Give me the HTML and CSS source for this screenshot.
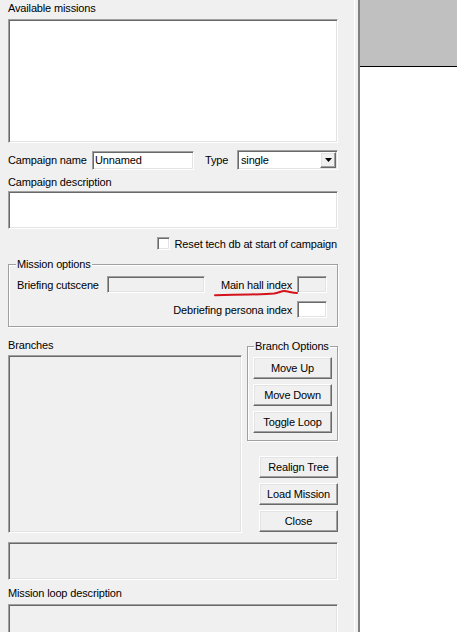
FILE: index.html
```html
<!DOCTYPE html>
<html lang="en">
<head>
    <meta charset="UTF-8">
    <title>Campaign Editor</title>
    <link rel="stylesheet" href="styles.css">
</head>
<body>
    <div class="dialog">
        <div class="editor">
            <!-- Mission list -->
            <div class="caption first">Available missions</div>
            <div class="field sunken white mission-list"></div>

            <!-- Name and type -->
            <div class="name-row">
                <span class="name-label">Campaign name</span>
                <input type="text" class="field sunken white name-input" value="Unnamed">
                <span class="type-label">Type</span>
                <div class="field sunken white combo">
                    <span>single</span>
                    <span class="combo-btn">
                        <svg width="7" height="4" viewBox="0 0 7 4"><polygon points="0,0 7,0 3.5,4" fill="#000"/></svg>
                    </span>
                </div>
            </div>

            <div class="caption desc-label">Campaign description</div>
            <div class="field sunken white desc-box"></div>

            <div class="check-row">
                <span class="checkbox sunken white"></span>
                <span>Reset tech db at start of campaign</span>
            </div>

            <!-- Mission options -->
            <fieldset class="group mission-options">
                <legend>Mission options</legend>
                <div class="opt-row">
                    <span class="cutscene-label">Briefing cutscene</span>
                    <div class="field sunken cutscene"></div>
                    <span class="hall-label">Main hall index</span>
                    <div class="field sunken index"></div>
                </div>
                <div class="opt-row end">
                    <span>Debriefing persona index</span>
                    <div class="field sunken white index"></div>
                </div>
            </fieldset>

            <!-- Branch tree and buttons -->
            <div class="branch-area">
                <div class="branch-col">
                    <div class="caption">Branches</div>
                    <div class="field sunken tree"></div>
                </div>
                <div class="side-col">
                    <fieldset class="group branch-options">
                        <legend>Branch Options</legend>
                        <button class="btn">Move Up</button>
                        <button class="btn">Move Down</button>
                        <button class="btn">Toggle Loop</button>
                    </fieldset>
                    <div class="actions">
                        <button class="btn">Realign Tree</button>
                        <button class="btn">Load Mission</button>
                        <button class="btn">Close</button>
                    </div>
                </div>
            </div>

            <div class="field sunken loop-brief"></div>
            <div class="caption loop-label">Mission loop description</div>
            <div class="field sunken loop-desc"></div>

            <!-- red pen mark under the hall index label -->
            <svg class="scribble" width="90" height="12" viewBox="0 0 90 12">
                <path d="M3 7.2 C25 6.8 50 6.5 62 5.5 C67 4.8 69 3 72 3 C76 3 80 5 85 5" fill="none" stroke="#d3141c" stroke-width="2" stroke-linecap="round"/>
            </svg>
        </div>
        <div class="splitter"></div>
        <div class="view">
            <div class="view-top"></div>
        </div>
    </div>
</body>
</html>
```

FILE: styles.css
```css
body {
    margin: 0;
    background-color: #fff;
    font-family: "Liberation Sans", Arial, sans-serif;
    font-size: 11px;
    letter-spacing: -0.15px;
    color: #000;
}
.dialog {
    display: flex;
    height: 100vh;
    overflow: hidden;
}
.editor {
    position: relative;
    flex-shrink: 0;
    width: 354px;
    box-sizing: border-box;
    padding: 0 16px 0 8px;
    background-color: #f0f0f0;
}
.caption {
    height: 13px;
    line-height: 13px;
    white-space: nowrap;
}
.caption.first {
    margin-top: 2px;
}

/* sunken 3d edit frame */
.sunken {
    box-sizing: border-box;
    border: 1px solid;
    border-color: #a0a0a0 #fff #fff #a0a0a0;
    box-shadow: inset 1px 1px #696969, inset -1px -1px #e3e3e3;
    background-color: #f0f0f0;
}
.white {
    background-color: #fff;
}
.mission-list {
    margin-top: 4px;
    height: 124px;
}
.name-row {
    display: flex;
    align-items: center;
    margin-top: 7px;
    height: 20px;
}
.name-label {
    width: 84px;
}
.name-input {
    width: 102px;
    height: 19px;
    padding: 0 2px;
    font: inherit;
    letter-spacing: inherit;
    color: #000;
    outline: none;
}
.type-label {
    margin-left: 11px;
    width: 32px;
}
.combo {
    width: 101px;
    height: 20px;
    display: flex;
    align-items: center;
    justify-content: space-between;
    padding-left: 3px;
}
.combo-btn {
    box-sizing: border-box;
    width: 16px;
    height: 16px;
    margin-right: 1px;
    display: flex;
    align-items: center;
    justify-content: center;
    background-color: #f0f0f0;
    border: 1px solid;
    border-color: #fff #696969 #696969 #fff;
    box-shadow: inset -1px -1px #a0a0a0, inset 1px 1px #e3e3e3;
}
.desc-label {
    margin-top: 6px;
}
.desc-box {
    margin-top: 2px;
    height: 38px;
}
.check-row {
    display: flex;
    justify-content: flex-end;
    align-items: center;
    gap: 5px;
    height: 13px;
    margin-top: 8px;
    padding-right: 1px;
}
.checkbox {
    width: 13px;
    height: 13px;
}

/* etched group boxes */
.group {
    min-width: 0;
    margin: 0;
    border: 1px solid #a0a0a0;
    box-shadow: inset 1px 1px #fff, 1px 1px #fff;
}
.group legend {
    padding: 0 1px;
    line-height: 13px;
    background-color: #f0f0f0;
}
.mission-options {
    margin-top: 8px;
    padding: 0 10px 8px 7px;
}
.opt-row {
    display: flex;
    align-items: center;
    height: 17px;
    margin-top: 5px;
    padding-left: 1px;
}
.opt-row.end {
    justify-content: flex-end;
    gap: 5px;
    margin-top: 8px;
}
.cutscene-label {
    width: 90px;
}
.cutscene {
    width: 98px;
    height: 17px;
}
.hall-label {
    margin-left: auto;
    margin-right: 5px;
}
.index {
    width: 30px;
    height: 17px;
}
.branch-area {
    display: flex;
    gap: 5px;
    margin-top: 12px;
}
.branch-col {
    width: 235px;
}
.tree {
    margin-top: 3px;
    height: 178px;
}
.side-col {
    width: 91px;
    margin-top: 1px;
}
.branch-options {
    display: flex;
    flex-direction: column;
    gap: 5px;
    padding: 0 5px 7px;
}
.branch-options legend {
    margin-left: 1px;
}
.branch-options .btn:first-of-type {
    margin-top: 4px;
}
.actions {
    display: flex;
    flex-direction: column;
    align-items: flex-end;
    gap: 5px;
    margin-top: 15px;
}
.btn {
    box-sizing: border-box;
    width: 79px;
    height: 22px;
    padding: 0;
    font: inherit;
    letter-spacing: inherit;
    color: #000;
    background-color: #f0f0f0;
    border: 1px solid;
    border-color: #fff #696969 #696969 #fff;
    box-shadow: inset -1px -1px #a0a0a0, inset 1px 1px #e3e3e3;
}
.loop-brief {
    margin-top: 9px;
    height: 38px;
}
.loop-label {
    margin-top: 7px;
}
.loop-desc {
    margin-top: 4px;
    height: 40px;
}
.scribble {
    position: absolute;
    left: 212px;
    top: 288px;
}
.splitter {
    flex-shrink: 0;
    width: 4px;
    box-sizing: border-box;
    border-left: 1px solid #fff;
    background-color: #f0f0f0;
}
.view {
    flex: 1;
    background-color: #fff;
    border-left: 2px solid #808080;
}
.view-top {
    height: 66px;
    background-color: #c0c0c0;
    border-bottom: 1px solid #000;
}
```
